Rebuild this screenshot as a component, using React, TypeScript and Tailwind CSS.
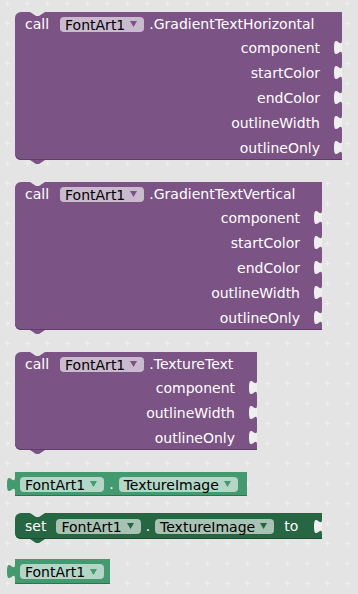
const FONT = "font-['DejaVu_Sans',sans-serif]";

function GridBg() {
  return (
    <svg className="absolute inset-0 h-full w-full" aria-hidden>
      <defs>
        <pattern id="grid" width="20" height="20" patternUnits="userSpaceOnUse">
          <rect x="5" y="3" width="5" height="1" fill="#efefef" />
          <rect x="7" y="1" width="1" height="5" fill="#efefef" />
        </pattern>
      </defs>
      <rect width="100%" height="100%" fill="url(#grid)" />
    </svg>
  );
}

function Arrow({ color }: { color: string }) {
  return (
    <svg width="7" height="6" viewBox="0 0 7 6" className="shrink-0">
      <polygon points="0,0 7,0 3.5,6" fill={color} />
    </svg>
  );
}

function Field({ label, arrow }: { label: string; arrow: string }) {
  return (
    <div className="flex h-[15px] shrink-0 items-center gap-[5px] rounded-[4px] bg-white/60 pl-[5px] pr-[7px] text-black">
      <span className="pt-[1px] leading-none">{label}</span>
      <Arrow color={arrow} />
    </div>
  );
}

// concave socket cut into the right edge of a block
function Socket() {
  return (
    <svg width="8" height="15" viewBox="-8 0 8 15" className="shrink-0 overflow-visible">
      <path d="M0,0 C0,10 -8,-8 -8,7.5 S0,5 0,15 Z" fill="#efefef" />
    </svg>
  );
}

// V notch on top + tab below for statement blocks
function Notches({ color }: { color: string }) {
  return (
    <>
      <svg width="15" height="4" className="absolute left-[15px] top-0">
        <polygon points="0,0 6,4 9,4 15,0" fill="#e4e4e4" />
      </svg>
      <svg width="15" height="4" className="absolute -bottom-[4px] left-[15px]">
        <polygon points="0,0 6,4 9,4 15,0" fill={color} />
      </svg>
    </>
  );
}

function OutputTab({ color }: { color: string }) {
  return (
    <svg width="8" height="15" viewBox="-8 0 8 15" className="absolute -left-[8px] top-[5px] overflow-visible">
      <path d="M0,0 C0,10 -8,-8 -8,7.5 S0,5 0,15 Z" fill={color} />
    </svg>
  );
}

function MethodBlock({ method, params, width, className }: { method: string; params: string[]; width: string; className: string }) {
  return (
    <div className={`relative ml-[15px] rounded-l-[6px] bg-[#7c5385] text-white shadow-[inset_0_-1px_0_#5e3d66] ${width} ${className}`}>
      <Notches color="#7c5385" />
      <div className="flex h-[23px] items-center pl-[10px] pt-[1px]">
        <span className="pt-[1px]">call</span>
        <div className="ml-[11px]"><Field label="FontArt1" arrow="#7c5385" /></div>
        <span className="ml-[5px] pt-[1px]">{method}</span>
      </div>
      {params.map((p) => (
        <div key={p} className="flex h-[25px] items-center justify-end gap-[14px]">
          <span className="pt-[2px]">{p}</span>
          <Socket />
        </div>
      ))}
    </div>
  );
}

export default function App() {
  return (
    <div className={`relative h-[594px] w-[358px] overflow-hidden bg-[#e4e4e4] text-[14px] ${FONT}`}>
      <GridBg />
      <div className="relative flex flex-col items-start pt-[12px]">
        <MethodBlock method=".GradientTextHorizontal" params={['component', 'startColor', 'endColor', 'outlineWidth', 'outlineOnly']} width="w-[327px]" className="" />
        <MethodBlock method=".GradientTextVertical" params={['component', 'startColor', 'endColor', 'outlineWidth', 'outlineOnly']} width="w-[307px]" className="mt-[22px]" />
        <MethodBlock method=".TextureText" params={['component', 'outlineWidth', 'outlineOnly']} width="w-[242px]" className="mt-[22px]" />

        <div className="relative ml-[15px] mt-[22px] flex h-[24px] w-[232px] items-center gap-[5px] bg-[#439970] pl-[5px] text-white shadow-[inset_0_-1px_0_#2f7352]">
          <OutputTab color="#439970" />
          <Field label="FontArt1" arrow="#439970" />
          <span className="pt-[1px]">.</span>
          <Field label="TextureImage" arrow="#439970" />
        </div>

        <div className="relative ml-[15px] mt-[17px] flex h-[26px] w-[307px] items-center rounded-l-[6px] bg-[#266643] pl-[10px] text-white shadow-[inset_0_-1px_0_#1a4a30]">
          <Notches color="#266643" />
          <span className="pt-[1px]">set</span>
          <div className="ml-[10px] flex items-center gap-[5px]">
            <Field label="FontArt1" arrow="#266643" />
            <span className="pt-[1px]">.</span>
            <Field label="TextureImage" arrow="#266643" />
          </div>
          <span className="ml-[10px] pt-[1px]">to</span>
          <div className="ml-auto"><Socket /></div>
        </div>

        <div className="relative ml-[15px] mt-[20px] flex h-[25px] w-[95px] items-center bg-[#439970] pl-[5px] shadow-[inset_0_-1px_0_#2f7352]">
          <OutputTab color="#439970" />
          <Field label="FontArt1" arrow="#439970" />
        </div>
      </div>
    </div>
  );
}
